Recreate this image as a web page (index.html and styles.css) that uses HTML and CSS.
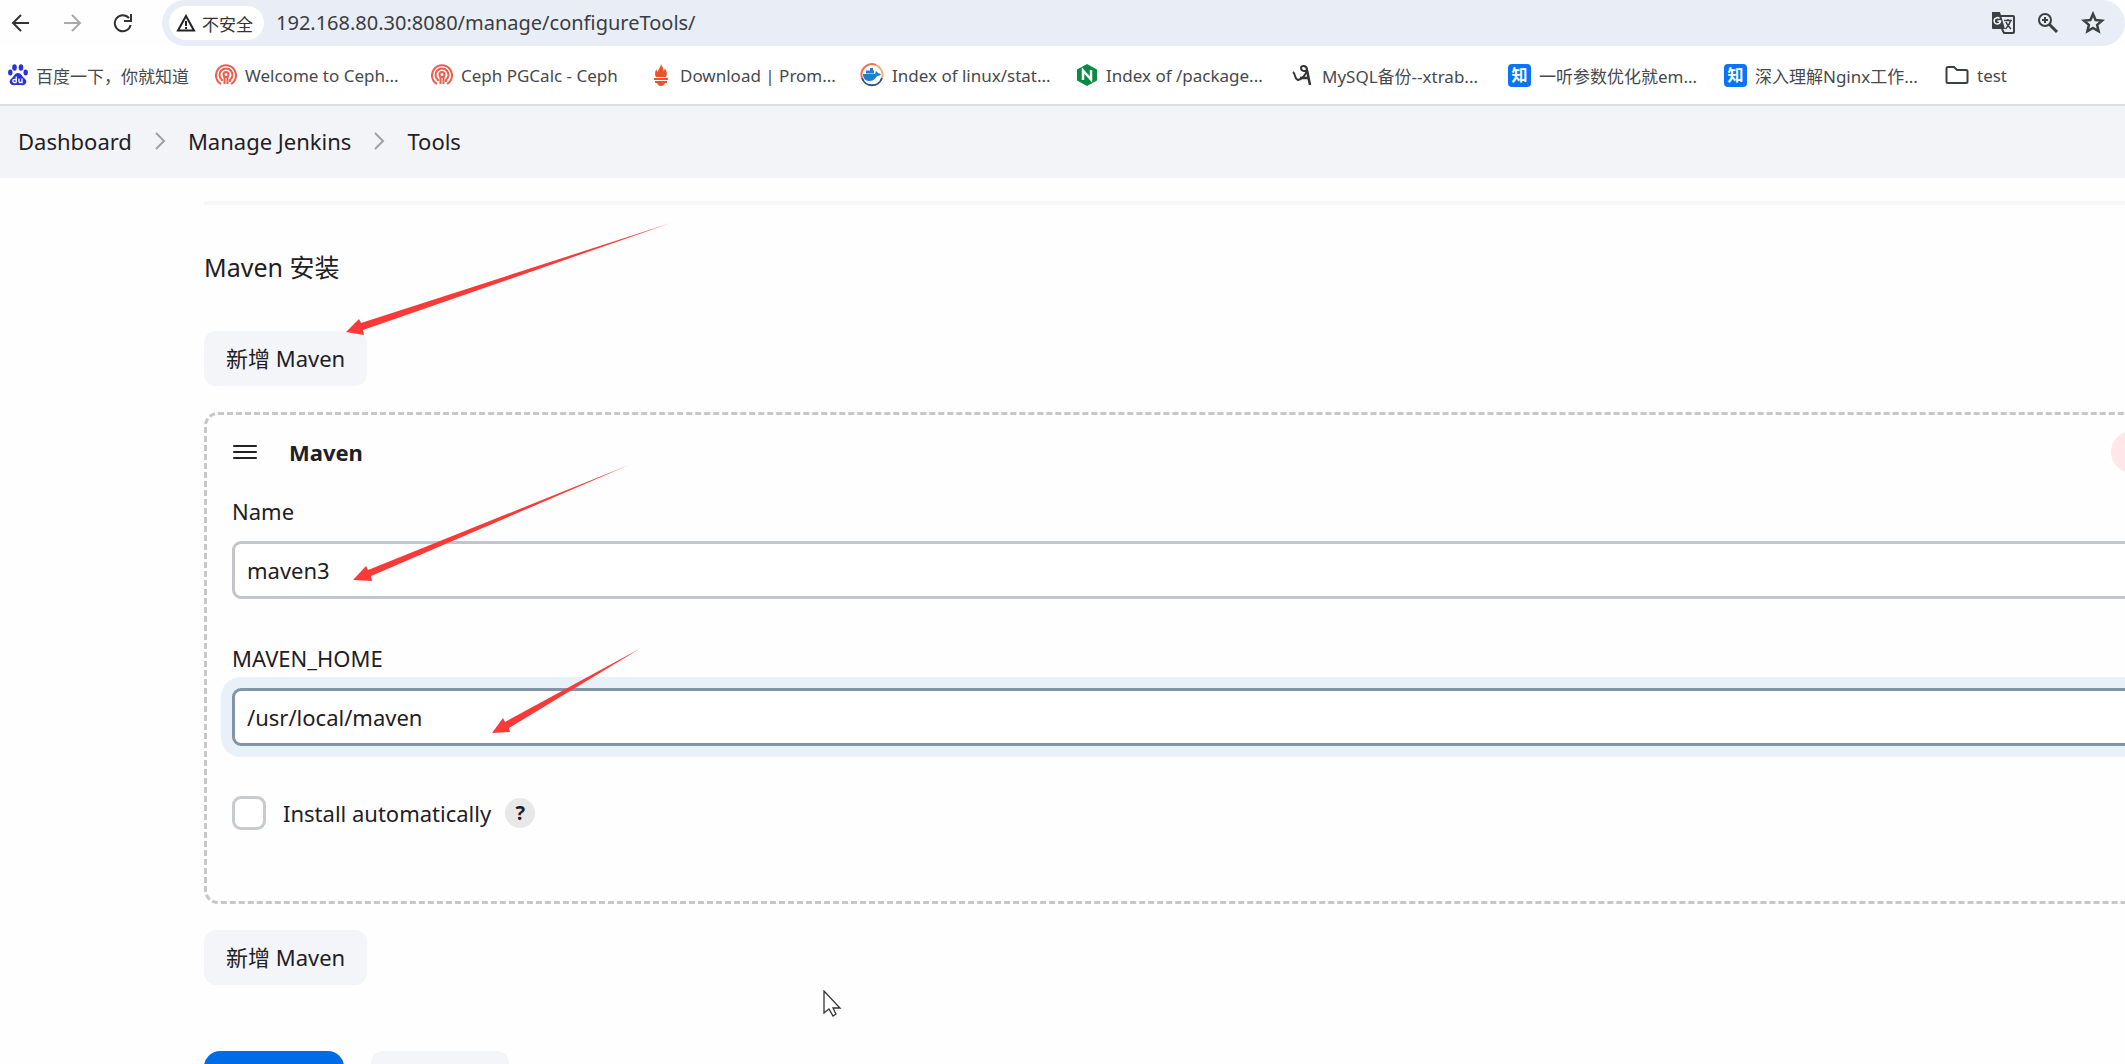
FILE: index.html
```html
<!DOCTYPE html>
<html lang="zh-CN">
<head>
    <meta charset="UTF-8">
    <meta name="viewport" content="width=device-width, initial-scale=1.0">
    <title>Tools</title>
    <link rel="stylesheet" href="styles.css">
</head>
<body>
    <div class="toolbar">
        <button class="nav-btn" aria-label="Back">
            <svg width="20" height="20" viewBox="0 0 20 20" fill="none" stroke="#333" stroke-width="2"><path d="M18 10H3M10 2L2 10l8 8"/></svg>
        </button>
        <button class="nav-btn" aria-label="Forward">
            <svg width="20" height="20" viewBox="0 0 20 20" fill="none" stroke="#a9a9a9" stroke-width="2"><path d="M2 10h15M10 2l8 8-8 8"/></svg>
        </button>
        <button class="nav-btn" aria-label="Reload">
            <svg width="20" height="20" viewBox="0 0 20 20" fill="none" stroke="#333" stroke-width="2"><path d="M16 5.2A8 8 0 1 0 17.6 12"/><path d="M18 1v7h-7"/></svg>
        </button>
        <div class="address">
            <button class="chip">
                <svg width="20" height="18" viewBox="0 0 20 18" fill="none" stroke="#222" stroke-width="2"><path d="M10 2L2 16.500h16z"/><path d="M10 7v5M10 13v2"/></svg>
                不安全
            </button>
            <input class="url" type="text" aria-label="Address" value="192.168.80.30:8080/manage/configureTools/">
            <div class="address-icons">
                <button class="icon-btn" aria-label="Translate">
                    <svg width="24" height="24" viewBox="0 0 24 24"><path d="M10 5h12a1 1 0 0 1 1 1v15a1 1 0 0 1-1 1H13l-2-4" fill="none" stroke="#3c4043" stroke-width="2"/><path d="M1 1h8l5 17H2a1 1 0 0 1-1-1z" fill="#3c4043"/><path d="M8.500 7.500A3.200 3.200 0 1 0 9.500 10H6.500" fill="none" stroke="#fff" stroke-width="1.500"/><path d="M13 9.500h8M17 8v2M19.500 10c-1 4-3 6-5 8M15 11c1 3 3 5 5 7" fill="none" stroke="#3c4043" stroke-width="1.500"/></svg>
                </button>
                <button class="icon-btn" aria-label="Zoom">
                    <svg width="22" height="22" viewBox="0 0 22 22" fill="none" stroke="#3c4043" stroke-width="2"><circle cx="8" cy="8" r="6"/><path d="M12.500 12.500L20 20" stroke-width="3"/><path d="M8 5v6M5 8h6"/></svg>
                </button>
                <button class="icon-btn" aria-label="Bookmark">
                    <svg width="24" height="24" viewBox="0 0 24 24" fill="none" stroke="#3c4043" stroke-width="2.500"><path d="M12 3l2.600 6 6.400.6-4.900 4.300 1.500 6.400L12 17l-5.600 3.300 1.500-6.400L3 9.600 9.400 9z"/></svg>
                </button>
            </div>
        </div>
    </div>

    <nav class="bookmarks">
        <a href="#" class="bookmark first">
            <svg width="20" height="22" viewBox="0 0 20 22" fill="#2a32d8"><ellipse cx="6.500" cy="3.500" rx="2.300" ry="3.200"/><ellipse cx="13" cy="3.500" rx="2.300" ry="3.200"/><ellipse cx="2.300" cy="8.500" rx="2.200" ry="3"/><ellipse cx="17.700" cy="8.500" rx="2.200" ry="3"/><path d="M10 9c3 0 4 3 6 5s3 3 2 5-3 2.500-5 2H7c-2 .5-4 0-5-2s0-3 2-5 3-5 6-5z"/><path d="M8.300 12.500v6M8.300 15.500h-2a1.300 1.300 0 0 0 0 3h2M11 14.500v3q0 1 1 1h2v-4" fill="none" stroke="#fff" stroke-width="1.300"/></svg>
            <span>百度一下，你就知道</span>
        </a>
        <a href="#" class="bookmark">
            <svg width="22" height="22" viewBox="0 0 22 22" fill="none" stroke="#ee5c4e" stroke-width="2"><path d="M6 20a10 10 0 1 1 10 0"/><path d="M7 17v-1a6.500 6.500 0 1 1 8 0v2"/><circle cx="11" cy="10.500" r="2.500"/><path d="M9.500 13v7M12.500 13v7"/></svg>
            <span>Welcome to Ceph...</span>
        </a>
        <a href="#" class="bookmark">
            <svg width="22" height="22" viewBox="0 0 22 22" fill="none" stroke="#ee5c4e" stroke-width="2"><path d="M6 20a10 10 0 1 1 10 0"/><path d="M7 17v-1a6.500 6.500 0 1 1 8 0v2"/><circle cx="11" cy="10.500" r="2.500"/><path d="M9.500 13v7M12.500 13v7"/></svg>
            <span>Ceph PGCalc - Ceph</span>
        </a>
        <a href="#" class="bookmark narrow">
            <svg width="16" height="22" viewBox="3 0 16 22" fill="#e8552c"><path d="M11 0c1 3 3 4 2.500 7 1-1 1.300-2 1.200-3 2 3 3 6 1.300 9H6C4.300 10 5 8 6.500 5c0 1 .3 2 1.500 3C8 5 10.500 4 11 0z"/><path d="M4 14h14v2H4zM5 17h12v2H5zM7 19h8q-1 3-4 3t-4-3z"/></svg>
            <span>Download | Prom...</span>
        </a>
        <a href="#" class="bookmark">
            <svg width="24" height="24" viewBox="0 0 24 24" fill="none" stroke-width="2"><path d="M2 15A10.500 10.500 0 0 1 16 2" stroke="#ee7355"/><path d="M16 2a10.500 10.500 0 0 1 6 13" stroke="#f4b071"/><path d="M22 15A10.500 10.500 0 0 1 2 15" stroke="#34507c"/><path d="M3 11h12l1-3 2 2 3 1c-1 1.500-2 2-4 2-2 4-5 5-8 5-4 0-6-3-6-7z" fill="#1d80d0"/><path d="M6 7.500h8v3H6zM10 5h3v3h-3z" fill="#1d80d0"/></svg>
            <span>Index of linux/stat...</span>
        </a>
        <a href="#" class="bookmark">
            <svg width="22" height="24" viewBox="0 0 22 24"><path d="M11 1l10 5.500v11L11 23 1 17.500v-11z" fill="#0a8a45"/><path d="M7 17V7.500l8 9V7" fill="none" stroke="#fff" stroke-width="2.500"/></svg>
            <span>Index of /package...</span>
        </a>
        <a href="#" class="bookmark">
            <svg width="22" height="24" viewBox="0 0 22 24" fill="none" stroke="#333" stroke-width="2"><path d="M1 9c3 2 1 7 5 8 4-1 8-5 9-10 0-5-6-5-6-2 0 3 4 4 6 2"/><path d="M8 15h9M15 7l3 15" stroke-width="2.500"/></svg>
            <span>MySQL备份--xtrab...</span>
        </a>
        <a href="#" class="bookmark">
            <b class="zhihu">知</b>
            <span>一听参数优化就em...</span>
        </a>
        <a href="#" class="bookmark">
            <b class="zhihu">知</b>
            <span>深入理解Nginx工作...</span>
        </a>
        <a href="#" class="bookmark folder">
            <svg width="24" height="20" viewBox="0 0 24 20" fill="none" stroke="#3c4043" stroke-width="2"><path d="M3 2h6l3 3h9q1.500 0 1.500 1.500v10Q22.500 18 21 18H3q-1.500 0-1.500-1.500v-13Q1.500 2 3 2z"/></svg>
            <span>test</span>
        </a>
    </nav>

    <nav class="breadcrumbs">
        <a href="#">Dashboard</a>
        <svg width="12" height="18" viewBox="0 0 12 18" fill="none" stroke="#a0a0a4" stroke-width="2"><path d="M2 1l8 8-8 8"/></svg>
        <a href="#">Manage Jenkins</a>
        <svg width="12" height="18" viewBox="0 0 12 18" fill="none" stroke="#a0a0a4" stroke-width="2"><path d="M2 1l8 8-8 8"/></svg>
        <a href="#">Tools</a>
    </nav>

    <main class="content">
        <form class="tools">
            <h2>Maven 安装</h2>
            <button type="button" class="btn">新增 Maven</button>
            <section class="card">
                <div class="card-header">
                    <svg width="24" height="16" viewBox="0 0 24 16" stroke="#222" stroke-width="2" stroke-linecap="round"><path d="M1 2h22M1 8h22M1 14h22"/></svg>
                    <h3>Maven</h3>
                    <button type="button" class="delete" aria-label="Delete"></button>
                </div>
                <div class="field">
                    <label for="name">Name</label>
                    <input type="text" id="name" value="maven3">
                </div>
                <div class="field">
                    <label for="home">MAVEN_HOME</label>
                    <input type="text" id="home" class="active" value="/usr/local/maven">
                </div>
                <div class="check">
                    <input type="checkbox" id="auto">
                    <label for="auto">Install automatically</label>
                    <button type="button" class="help">?</button>
                </div>
            </section>
            <button type="button" class="btn">新增 Maven</button>
            <div class="actions">
                <button type="button" class="btn primary" aria-label="保存"></button>
                <button type="button" class="btn apply" aria-label="应用"></button>
            </div>
        </form>
    </main>

    <!-- arrows over the form -->
    <svg class="arrow arrow-add" width="326" height="114" viewBox="0 0 326 114"><path d="M0 109l13-13 2 4L325 0 17 107l1 5z"/></svg>
    <svg class="arrow arrow-name" width="277" height="116" viewBox="0 0 277 116"><path d="M0 115l13-14 2 4L276 0 18 111l1 5z"/></svg>
    <svg class="arrow arrow-home" width="149" height="85" viewBox="0 0 149 85"><path d="M0 85l11-15 2 4L149 0 17 80l1 4z"/></svg>
    <svg class="pointer" width="20" height="28" viewBox="0 0 20 28" fill="#fff" stroke="#333" stroke-width="1.300"><path d="M1 1v22l5-4 4 7 3-2-3-6h7z"/></svg>
</body>
</html>
```
FILE: styles.css
```css
* {
    box-sizing: border-box;
}
body {
    margin: 0;
    height: 100vh;
    overflow: hidden;
    display: flex;
    flex-direction: column;
    background: #fefefe;
    color: #1f2024;
    font-family: "Noto Sans", "Noto Sans CJK SC", sans-serif;
    font-size: 22px;
}
button, input {
    font: inherit;
    color: inherit;
}
button {
    border: none;
    background: none;
    padding: 0;
    cursor: pointer;
}
a {
    color: inherit;
    text-decoration: none;
}
svg {
    display: block;
    flex: none;
}

/* browser bar */
.toolbar {
    display: flex;
    align-items: center;
    height: 46px;
    flex: none;
    padding-left: 11px;
    gap: 31px;
}
.nav-btn {
    width: 20px;
    height: 20px;
}
.address {
    flex: 1;
    display: flex;
    align-items: center;
    height: 46px;
    margin-left: -2px;
    padding: 0 20px 0 7px;
    border-radius: 23px;
    background: #e9edf6;
}
.chip {
    display: flex;
    align-items: center;
    gap: 6px;
    height: 34px;
    padding: 0 11px 0 7px;
    border-radius: 17px;
    background: #fff;
    font-size: 17px;
    color: #333;
}
.url {
    flex: 1;
    min-width: 0;
    margin-left: 12px;
    padding: 0 0 2px;
    border: none;
    background: none;
    outline: none;
    font-size: 20px;
    color: #3a3d42;
}
.address-icons {
    display: flex;
    align-items: center;
    gap: 22px;
}
.bookmarks {
    display: flex;
    align-items: center;
    height: 60px;
    flex: none;
    padding-left: 8px;
    border-bottom: 2px solid #dedede;
    background: #fff;
    color: #47494d;
    font-size: 17px;
    white-space: nowrap;
}
.bookmark {
    display: flex;
    flex: none;
    align-items: center;
    gap: 8px;
    width: 216px;
}
.first {
    width: 207px;
}
.narrow {
    gap: 11px;
    padding-left: 6px;
    width: 213px;
}
.folder {
    padding-left: 5px;
}
.zhihu {
    width: 23px;
    height: 23px;
    border-radius: 4px;
    background: #0a74f7;
    color: #fff;
    font-size: 16px;
    line-height: 22px;
    text-align: center;
}

/* page */
.breadcrumbs {
    display: flex;
    align-items: center;
    gap: 22px;
    height: 72px;
    flex: none;
    padding: 0 0 2px 18px;
    background: #f3f4f7;
}
.content {
    flex: 1;
    min-height: 0;
    overflow: hidden;
    padding: 23px 0 0 204px;
}
.tools {
    margin-right: -56px;
    border-top: 4px solid #f7f7f8;
}
h2 {
    margin: 44px 0 46px;
    font-size: 25px;
    line-height: 36px;
    font-weight: 400;
}
.btn {
    display: block;
    height: 55px;
    padding: 0 22px 4px;
    border-radius: 12px;
    background: #f4f5f8;
}
.card {
    margin: 26px 0;
    padding: 21px 25px 70px;
    border: 3px dashed #c6c7c9;
    border-radius: 14px;
}
.card-header {
    display: flex;
    align-items: center;
    height: 32px;
    padding-left: 1px;
}
h3 {
    margin: 0 auto 0 32px;
    font-size: 22px;
    font-weight: 700;
}
.delete {
    width: 42px;
    height: 42px;
    border-radius: 50%;
    background: #ffe6e8;
}
.field {
    display: flex;
    flex-direction: column;
    gap: 15px;
    padding-top: 28px;
}
.field + .field {
    padding-top: 44px;
}
.field label {
    line-height: 30px;
}
.field input {
    height: 58px;
    padding: 0 12px;
    border: 3px solid #c3c5ca;
    border-radius: 9px;
    background: #fff;
    outline: none;
}
.field .active {
    border-color: #8295a8;
    box-shadow: 0 0 0 11px #e9f1f8;
}
.check {
    display: flex;
    align-items: center;
    height: 36px;
    margin-top: 49px;
}
.check input {
    appearance: none;
    width: 34px;
    height: 34px;
    margin: 0 17px 0 0;
    border: 3px solid #c8cbcd;
    border-radius: 9px;
    background: #fff;
}
.help {
    width: 30px;
    height: 30px;
    margin-left: 14px;
    border-radius: 50%;
    background: #e8e8e9;
    font-size: 20px;
    font-weight: 700;
    line-height: 30px;
}
.actions {
    display: flex;
    gap: 27px;
    margin-top: 66px;
}
.primary {
    width: 140px;
    border-radius: 16px;
    background: #006be6;
}
.apply {
    width: 138px;
}

/* things lying over the page */
.arrow {
    position: absolute;
    fill: #fa3a38;
    pointer-events: none;
}
.arrow-add {
    left: 346px;
    top: 223px;
}
.arrow-name {
    left: 353px;
    top: 465px;
}
.arrow-home {
    left: 492px;
    top: 648px;
}
.pointer {
    position: absolute;
    left: 823px;
    top: 990px;
}
```
